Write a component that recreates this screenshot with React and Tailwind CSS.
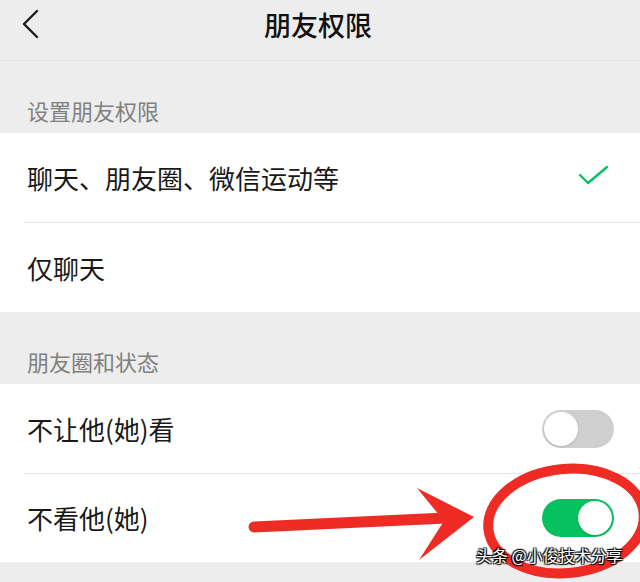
import React from "react";

const font = { fontFamily: '"Noto Sans CJK SC", "Noto Sans", sans-serif' };

function Toggle({ on }) {
  return (
    <div
      className={
        "relative w-[72px] h-[38px] rounded-full " +
        (on ? "bg-[#07c160]" : "bg-[#cfcfcf]")
      }
    >
      <div
        className={
          "absolute top-[2px] w-[34px] h-[34px] rounded-full bg-white shadow-[0_1px_2px_rgba(0,0,0,0.15)] " +
          (on ? "right-[2px]" : "left-[2px]")
        }
      />
    </div>
  );
}

function Row({ text, right, divider, h }) {
  return (
    <div className={"relative flex items-center pl-[27px] pr-[26px] " + h}>
      <span className="flex-1 text-[26px] text-[#191919] leading-none">{text}</span>
      {right}
      {divider && (
        <div className="absolute left-[24px] right-0 bottom-0 h-px bg-[#e8e8e8]" />
      )}
    </div>
  );
}

function Label({ text }) {
  return (
    <div className="h-[72px] flex items-center pt-[26px] pl-[27px]">
      <span className="text-[22px] text-[#808080] leading-none">{text}</span>
    </div>
  );
}

export default function App() {
  return (
    <div className="relative w-[640px] h-[582px] overflow-hidden bg-[#ededed]" style={font}>
      <div className="relative h-[61px] flex items-center justify-center border-b border-[#e2e2e2]">
        <svg className="absolute left-[20px] top-[8px]" width="24" height="34" viewBox="0 0 24 34">
          <polyline points="17,3 4,16 17,29" fill="none" stroke="#1a1a1a" strokeWidth="2.4" strokeLinecap="round" strokeLinejoin="round" />
        </svg>
        <span className="text-[27px] font-medium text-[#111] leading-none -mt-[11px] ml-[-4px]">朋友权限</span>
      </div>

      <Label text="设置朋友权限" />
      <div className="bg-white">
        <Row
          h="h-[90px]"
          text="聊天、朋友圈、微信运动等"
          divider
          right={
            <svg width="32" height="22" viewBox="0 0 32 22" className="mr-[4px] -mt-[4px]">
              <polyline points="2,10 10,18 29,2" fill="none" stroke="#07c160" strokeWidth="2.4" strokeLinecap="round" strokeLinejoin="round" />
            </svg>
          }
        />
        <Row h="h-[89px]" text="仅聊天" />
      </div>

      <Label text="朋友圈和状态" />
      <div className="bg-white">
        <Row h="h-[90px]" text="不让他(她)看" divider right={<Toggle on={false} />} />
        <Row h="h-[88px]" text="不看他(她)" right={<Toggle on />} />
      </div>

      <svg className="absolute inset-0 pointer-events-none" width="640" height="582" viewBox="0 0 640 582">
        <line x1="254" y1="527" x2="446" y2="518" stroke="#ee2b24" strokeWidth="11" strokeLinecap="round" />
        <polygon points="417,488 474,517 419,560 444,521" fill="#ee2b24" />
        <ellipse cx="566" cy="521" rx="78" ry="52" fill="none" stroke="#ee2b24" strokeWidth="10" transform="rotate(-6 566 521)" />
      </svg>

      <div
        className="absolute left-[476px] top-[547px] text-[16px] leading-none text-white whitespace-nowrap"
        style={{ textShadow: "1px 1px 1px #000, -1px -1px 1px #000, 1px -1px 1px #000, -1px 1px 1px #000" }}
      >
        头条 @小俊技术分享
      </div>
    </div>
  );
}
